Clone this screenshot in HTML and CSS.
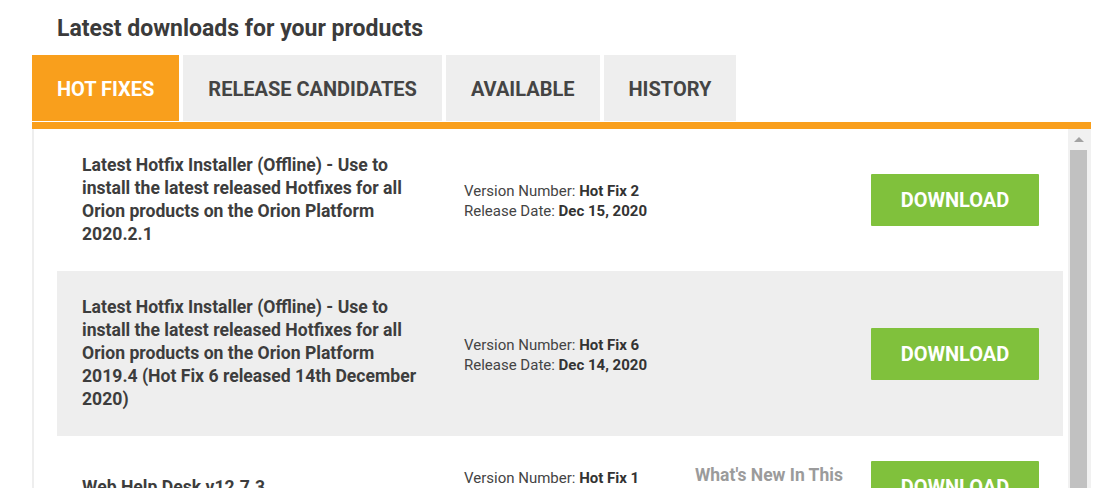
FILE: index.html
```html
<!DOCTYPE html>
<html>
<head>
<meta charset="utf-8">
<link rel="stylesheet" href="styles.css">
</head>
<body>
<div class="page">
  <h2 class="heading">Latest downloads for your products</h2>
  <div class="tabs">
    <div class="tab active">HOT FIXES</div>
    <div class="tab">RELEASE CANDIDATES</div>
    <div class="tab">AVAILABLE</div>
    <div class="tab">HISTORY</div>
  </div>
  <div class="panel">
    <div class="list">
      <div class="row">
        <div class="title">Latest Hotfix Installer (Offline) - Use to install the latest released Hotfixes for all Orion products on the Orion Platform 2020.2.1</div>
        <div class="meta">Version Number: <b>Hot Fix 2</b><br>Release Date: <b>Dec 15, 2020</b></div>
        <div class="whatsnew"></div>
        <div class="btn">DOWNLOAD</div>
      </div>
      <div class="row alt">
        <div class="title">Latest Hotfix Installer (Offline) - Use to install the latest released Hotfixes for all Orion products on the Orion Platform 2019.4 (Hot Fix 6 released 14th December 2020)</div>
        <div class="meta">Version Number: <b>Hot Fix 6</b><br>Release Date: <b>Dec 14, 2020</b></div>
        <div class="whatsnew"></div>
        <div class="btn">DOWNLOAD</div>
      </div>
      <div class="row">
        <div class="title">Web Help Desk v12.7.3</div>
        <div class="meta">Version Number: <b>Hot Fix 1</b><br>Release Date: <b>Dec 10, 2020</b></div>
        <div class="whatsnew">What's New In This Release</div>
        <div class="btn">DOWNLOAD</div>
      </div>
    </div>
    <div class="scrollbar">
      <div class="sb-up"><span class="sb-arrow"></span></div>
      <div class="sb-thumb"></div>
    </div>
  </div>
</div>
</body>
</html>
```
FILE: styles.css
```css
html, body {
  margin: 0;
  padding: 0;
  background: #fff;
  height: 488px;
  overflow: hidden;
  font-family: Roboto, "Liberation Sans", sans-serif;
}
.page {
  margin-left: 32px;
  width: 1059px;
  height: 488px;
  display: flex;
  flex-direction: column;
}
.heading {
  margin: 0;
  height: 55px;
  box-sizing: border-box;
  padding: 3px 0 0 25px;
  line-height: 52px;
  font-size: 23px;
  font-weight: 700;
  color: #3b3b3b;
}
.tabs {
  display: flex;
  gap: 4px;
  padding-bottom: 1px;
  border-bottom: 7px solid #f99f1c;
}
.tab {
  height: 66px;
  box-sizing: border-box;
  padding: 2px 25px 0;
  display: flex;
  align-items: center;
  background: #eeeeee;
  color: #444;
  font-size: 20px;
  font-weight: 700;
}
.tab.active {
  background: #f99f1c;
  color: #fff;
}
.panel {
  flex: 1;
  display: flex;
  border-left: 2px solid #eeeeee;
  min-height: 0;
}
.list {
  flex: 1;
  padding: 0 5px 0 23px;
  overflow: hidden;
}
.row {
  display: grid;
  grid-template-columns: 382px 231px 176px 168px;
  align-items: center;
  padding: 25px 24px 25px 25px;
}
.row.alt {
  background: #eeeeee;
}
.title {
  max-width: 340px;
  font-size: 17.6px;
  line-height: 23px;
  font-weight: 700;
  color: #3d3d3d;
}
.meta {
  font-size: 15px;
  line-height: 20px;
  padding-top: 2px;
  color: #444;
}
.meta b {
  color: #333;
}
.whatsnew {
  font-size: 17.5px;
  line-height: 23px;
  font-weight: 700;
  color: #9b9b9b;
}
.btn {
  height: 52px;
  background: #80c13c;
  color: #fff;
  font-size: 20px;
  font-weight: 700;
  display: flex;
  align-items: center;
  justify-content: center;
  border-radius: 1px;
}
.scrollbar {
  width: 23px;
  background: #f1f1f1;
  display: flex;
  flex-direction: column;
  align-items: flex-start;
}
.sb-up {
  width: 21px;
  height: 21px;
  display: flex;
  align-items: center;
  justify-content: center;
}
.sb-arrow {
  width: 0;
  height: 0;
  border-left: 5px solid transparent;
  border-right: 5px solid transparent;
  border-bottom: 5px solid #a3a3a3;
}
.sb-thumb {
  margin-left: 2px;
  width: 17px;
  flex: 1;
  background: #c1c1c1;
}
```
